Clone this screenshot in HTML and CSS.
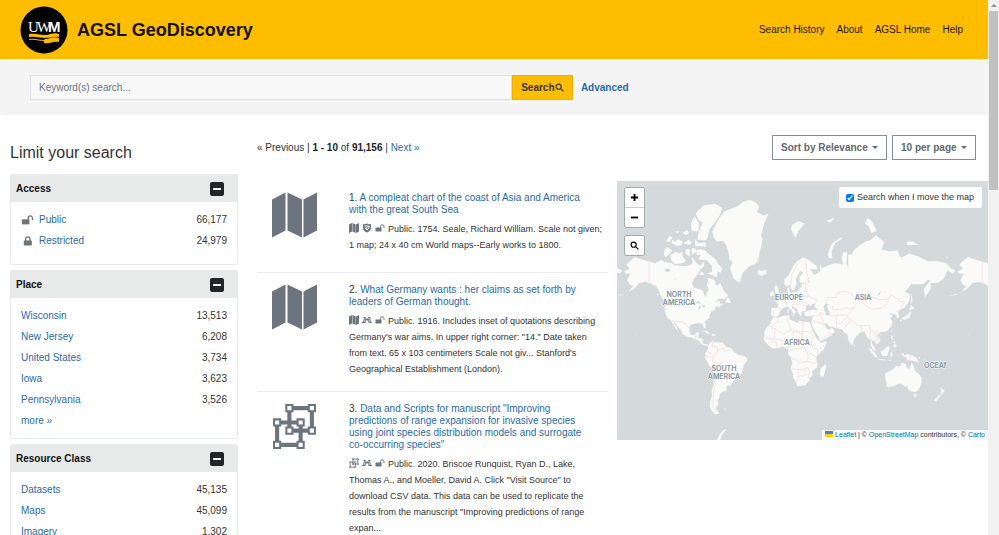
FILE: index.html
```html
<!DOCTYPE html>
<html lang="en">
<head>
<meta charset="utf-8">
<title>AGSL GeoDiscovery</title>
<meta name="viewport" content="width=device-width, initial-scale=1">
<link rel="stylesheet" href="styles.css">
</head>
<body>
<svg class="defs" width="0" height="0" aria-hidden="true">
  <symbol id="i-map" viewBox="0 0 45 45">
    <path d="M0 7 13.500 0v38L0 45zM15.500 0 30 7v38l-14.500-7zM31.500 7 45 0v38l-13.500 7z"/>
  </symbol>
  <symbol id="i-polygon" viewBox="0 0 42 45">
    <path fill="none" stroke="currentColor" stroke-width="4" d="M16 5h22v22H16zM4 19h23v22H4z"/>
    <path d="M12 1h8v8h-8zM34 1h8v8h-8zM34 23h8v8h-8zM12 23h8v8h-8zM0 15h8v8H0zM23 15h8v8h-8zM0 37h8v8H0zM23 37h8v8h-8z"/>
    <path fill="#fff" d="M14 3h4v4h-4zM36 3h4v4h-4zM36 25h4v4h-4zM14 25h4v4h-4zM2 17h4v4H2zM25 17h4v4h-4zM2 39h4v4H2zM25 39h4v4h-4z"/>
  </symbol>
  <symbol id="i-unlock" viewBox="0 0 20 16">
    <path d="M1 7h12v8H1z"/><path fill="none" stroke="currentColor" stroke-width="2" d="M11 8V5a3.500 3.500 0 0 1 7 0v3"/>
  </symbol>
  <symbol id="i-lock" viewBox="0 0 20 16">
    <rect x="4" y="7" width="13" height="8" rx="1"/><path fill="none" stroke="currentColor" stroke-width="2" d="M7 8V5a3.500 3.500 0 0 1 7 0v3"/>
  </symbol>
  <symbol id="i-shield" viewBox="0 0 18 20">
    <path d="M1 2q4 1 8-1 4 2 8 1v8c0 5-5 8-8 9-3-1-8-4-8-9z"/><path fill="none" stroke="#fff" stroke-width="2" d="M4 6h9v4l-4 4-3-4h4"/>
  </symbol>
  <symbol id="i-minn" viewBox="0 0 20 14">
    <path fill="none" stroke="currentColor" stroke-width="2" d="M3 2h4l3 6 3-6h4M5 2 3 12M15 2l2 10M7 5l-1 7M13 5l1 7M0 12h7M13 12h7"/>
  </symbol>
  <symbol id="i-search" viewBox="0 0 16 16">
    <circle cx="6.500" cy="6.500" r="4.500" fill="none" stroke="currentColor"/><path stroke="currentColor" d="m10 10 5 5"/>
  </symbol>
</svg>
<div class="window">
  <div class="page">
    <header class="masthead">
      <a class="brand" href="#">
        <svg class="brand-logo" viewBox="0 0 48 48" role="img" aria-label="UWM">
          <circle cx="24" cy="24" r="23.500" fill="#000"/>
          <text class="logo-text" x="8" y="26">U<tspan dx="-2">W</tspan><tspan class="logo-bold" dx="-3">M</tspan></text>
          <path fill="#ffbd00" d="M9 28c7-1 11 1 16 1s9-3 14-1v3c-5-1-9 1-14 1s-9-2-16-1zM9 33c6-1 10 1 15 1l1-1c5 0 9-3 14-1v4c-6-1-9 2-15 1v-2c-5 0-9-2-15-1z"/>
        </svg>
        <span class="brand-name">AGSL GeoDiscovery</span>
      </a>
      <nav class="topnav" aria-label="Main">
        <a href="#">Search History</a><a href="#">About</a><a href="#">AGSL Home</a><a href="#">Help</a>
      </nav>
    </header>

    <section class="searchbar">
      <form class="search-form" role="search">
        <input class="search-input" type="text" placeholder="Keyword(s) search..." aria-label="Keyword search">
        <button class="search-button" type="button">Search<svg class="search-icon"><use href="#i-search"/></svg></button>
      </form>
      <a class="advanced" href="#">Advanced</a>
    </section>

    <main class="layout">
      <aside class="sidebar">
        <h2 class="sidebar-title">Limit your search</h2>
        <section class="facet facet-access">
          <h3 class="facet-head">Access <button class="toggle" type="button" aria-label="Collapse Access"></button></h3>
          <ul class="facet-list">
            <li><svg class="facet-icon"><use href="#i-unlock"/></svg><a href="#">Public</a><span class="count">66,177</span></li>
            <li><svg class="facet-icon"><use href="#i-lock"/></svg><a href="#">Restricted</a><span class="count">24,979</span></li>
          </ul>
        </section>
        <section class="facet">
          <h3 class="facet-head">Place <button class="toggle" type="button" aria-label="Collapse Place"></button></h3>
          <ul class="facet-list">
            <li><a href="#">Wisconsin</a><span class="count">13,513</span></li>
            <li><a href="#">New Jersey</a><span class="count">6,208</span></li>
            <li><a href="#">United States</a><span class="count">3,734</span></li>
            <li><a href="#">Iowa</a><span class="count">3,623</span></li>
            <li><a href="#">Pennsylvania</a><span class="count">3,526</span></li>
            <li><a href="#">more »</a></li>
          </ul>
        </section>
        <section class="facet">
          <h3 class="facet-head">Resource Class <button class="toggle" type="button" aria-label="Collapse Resource Class"></button></h3>
          <ul class="facet-list">
            <li><a href="#">Datasets</a><span class="count">45,135</span></li>
            <li><a href="#">Maps</a><span class="count">45,099</span></li>
            <li><a href="#">Imagery</a><span class="count">1,302</span></li>
          </ul>
        </section>
      </aside>

      <div class="content">
        <div class="toolbar">
          <div class="pager">« Previous | <strong>1 - 10</strong> of <strong>91,156</strong> | <a href="#">Next »</a></div>
          <div class="dropdown"><select aria-label="Sort results"><option>Sort by Relevance</option></select></div>
          <div class="dropdown"><select aria-label="Results per page"><option>10 per page</option></select></div>
        </div>
        <div class="columns">
          <div class="results">
            <article class="result">
              <svg class="thumb"><use href="#i-map"/></svg>
              <div class="result-body">
                <h3 class="result-title">1. <a href="#">A compleat chart of the coast of Asia and America with the great South Sea</a></h3>
                <p class="result-text"><svg class="mini"><use href="#i-map"/></svg><svg class="mini"><use href="#i-shield"/></svg><svg class="mini"><use href="#i-unlock"/></svg>Public. 1754. Seale, Richard William. Scale not given; 1 map; 24 x 40 cm World maps--Early works to 1800.</p>
              </div>
            </article>
            <article class="result">
              <svg class="thumb"><use href="#i-map"/></svg>
              <div class="result-body">
                <h3 class="result-title">2. <a href="#">What Germany wants : her claims as set forth by leaders of German thought.</a></h3>
                <p class="result-text"><svg class="mini"><use href="#i-map"/></svg><svg class="mini"><use href="#i-minn"/></svg><svg class="mini"><use href="#i-unlock"/></svg>Public. 1916. Includes inset of quotations describing Germany's war aims. In upper right corner: "14." Date taken from text. 65 x 103 centimeters Scale not giv... Stanford's Geographical Establishment (London).</p>
              </div>
            </article>
            <article class="result">
              <svg class="thumb"><use href="#i-polygon"/></svg>
              <div class="result-body">
                <h3 class="result-title">3. <a href="#">Data and Scripts for manuscript "Improving predictions of range expansion for invasive species using joint species distribution models and surrogate co-occurring species"</a></h3>
                <p class="result-text"><svg class="mini"><use href="#i-polygon"/></svg><svg class="mini"><use href="#i-minn"/></svg><svg class="mini"><use href="#i-unlock"/></svg>Public. 2020. Briscoe Runquist, Ryan D., Lake, Thomas A., and Moeller, David A. Click "Visit Source" to download CSV data. This data can be used to replicate the results from the manuscript "Improving predictions of range expan...</p>
              </div>
            </article>
          </div>

          <div class="map">
            <svg class="map-canvas" viewBox="0 0 371 259" preserveAspectRatio="xMidYMid slice" role="img" aria-label="World map">
              <defs><clipPath id="tile-edge"><path d="M0 0h329v259H0z"/></clipPath></defs>
              <path fill="#d9dadb" d="M0 0h371v6H0z"/>
              <g id="world"></g>
              <g class="map-label" text-anchor="middle">
                <text x="62" y="116">NORTH</text><text x="62" y="124">AMERICA</text>
                <text x="107" y="190">SOUTH</text><text x="107" y="198">AMERICA</text>
                <text x="172" y="119">EUROPE</text><text x="246" y="119">ASIA</text><text x="180" y="164">AFRICA</text>
              </g>
              <g class="map-label" clip-path="url(#tile-edge)"><text x="307" y="187">OCEANIA</text></g>
            </svg>
            <div class="map-controls">
              <div class="control-group">
                <button type="button" aria-label="Zoom in"><svg viewBox="0 0 10 10"><path d="M5 1v8M1 5h8"/></svg></button>
                <button type="button" aria-label="Zoom out"><svg viewBox="0 0 10 10"><path d="M1 5h8"/></svg></button>
              </div>
              <div class="control-group"><button type="button" aria-label="Search here"><svg><use href="#i-search"/></svg></button></div>
            </div>
            <label class="map-toggle"><input type="checkbox" checked>Search when I move the map</label>
            <div class="attribution"><svg class="flag" viewBox="0 0 8 6"><path fill="#4c7be1" d="M0 0h8v3H0z"/><path fill="#ffd500" d="M0 3h8v3H0z"/></svg><a href="#">Leaflet</a> | © <a href="#">OpenStreetMap</a> contributors, © <a href="#">Carto</a></div>
          </div>
        </div>
      </div>
    </main>
  </div>
  <div class="scroll-rail" aria-hidden="true"><div class="scroll-arrow"></div><div class="scroll-thumb"></div></div>
</div>
<script src="map.js"></script>
</body>
</html>
```
FILE: styles.css
```css
* { box-sizing: border-box; }
body {
  margin: 0;
  font: 10px/15px "Liberation Sans", Arial, sans-serif;
  color: #333;
  background: #fff;
}
a { color: #2a6aa9; text-decoration: none; }
button, input, select { font: inherit; color: inherit; margin: 0; }
h2, h3, p, ul { margin: 0; padding: 0; }
svg { fill: currentColor; }
.defs { position: absolute; }

.window { display: flex; height: 100vh; overflow: hidden; }
.page { flex: 1; min-width: 0; }

.masthead {
  display: flex;
  align-items: center;
  justify-content: space-between;
  height: 59px;
  padding: 0 25px 0 20px;
  background: #ffbd00;
}
.brand { display: flex; align-items: center; gap: 9px; color: #111; }
.brand-logo { width: 48px; height: 48px; }
.logo-text { font: 15px "Liberation Serif", serif; fill: #fff; }
.logo-bold { font: 700 15px "Liberation Sans", sans-serif; }
.brand-name { font-size: 18px; line-height: 24px; font-weight: 700; }
.topnav { display: flex; gap: 12px; }
.topnav a { color: #1b1500; }

.searchbar {
  display: flex;
  align-items: center;
  gap: 8px;
  height: 56px;
  padding: 0 30px;
  background: #f4f4f4;
  border-radius: 0 0 3px 3px;
}
.search-form { display: flex; width: 58.5%; height: 25px; }
.search-input {
  flex: 1;
  min-width: 0;
  padding: 0 8px;
  border: 1px solid #dce0e4;
  background: #f8f8f8;
}
.search-input::placeholder { color: #6c757d; opacity: 1; }
.search-button {
  display: flex;
  align-items: center;
  justify-content: center;
  width: 61px;
  padding: 0;
  border: 1px solid #efb000;
  background: #ffbd00;
  color: #333;
  font-weight: 700;
}
.search-icon { width: 9px; height: 9px; stroke-width: 2; }
.advanced { font-weight: 700; }

.layout { display: grid; grid-template-columns: minmax(0, 1fr) minmax(0, 3fr); }
.sidebar { padding: 28px 9px 0 10px; }
.sidebar-title { margin-bottom: 11px; font-size: 16px; line-height: 20px; font-weight: 400; }
.facet {
  margin-bottom: 5px;
  padding-bottom: 7px;
  border: 1px solid #e9eaea;
  border-radius: 2px;
}
.facet-access { padding-bottom: 13px; }
.facet-head {
  display: flex;
  align-items: center;
  justify-content: space-between;
  height: 27px;
  padding: 0 13px 0 5px;
  background: #e8eaea;
  color: #111;
  font-size: 10px;
}
.toggle {
  display: grid;
  place-items: center;
  width: 14px;
  height: 14px;
  padding: 0;
  border: 0;
  border-radius: 2px;
  background: #212529;
}
.toggle::before { content: ""; width: 8px; height: 2px; background: #fff; }
.facet-list { padding: 7px 10px 0; list-style: none; }
.facet-list li { display: flex; align-items: center; height: 21px; }
.facet-icon { width: 13px; height: 10px; margin-right: 5px; color: #6c757d; }
.count { margin-left: auto; }

.content { padding: 20px 0 0 10px; }
.toolbar { display: flex; align-items: center; gap: 5px; height: 25px; margin-right: 12px; }
.pager { flex: 1; }
.pager strong { color: #212529; }
.dropdown { position: relative; color: #5f6870; }
.dropdown select {
  height: 25px;
  padding: 0 18px 0 8px;
  appearance: none;
  border: 1px solid #868e95;
  border-radius: 0;
  background: #fff;
  font-weight: 700;
}
.dropdown::after {
  content: "";
  position: absolute;
  right: 9px;
  top: 11px;
  border: 3px solid transparent;
  border-top-color: currentColor;
  border-bottom: 0;
  pointer-events: none;
}
.columns {
  display: grid;
  grid-template-columns: minmax(0, 351fr) minmax(0, 371fr);
  align-items: start;
  gap: 9px;
  margin-top: 21px;
}
.results { padding-top: 11px; }
.result { display: flex; gap: 32px; padding: 0 0 14px 15px; }
.result + .result { padding-top: 11px; border-top: 1px solid #ebebeb; }
.thumb { flex: none; width: 45px; height: 46px; color: #6c757d; }
.result-body { flex: 1; min-width: 0; min-height: 66px; }
.result-title { padding-right: 10px; margin-bottom: 5px; font-size: 10px; line-height: 12px; font-weight: 400; }
.result-text { padding-right: 4px; font-size: 9px; line-height: 16px; }
.mini { width: 10px; height: 10px; margin-right: 3px; vertical-align: -1px; color: #6c757d; }

.map { position: relative; background: #d4dadc; }
.map-canvas { display: block; width: 100%; }
.land { fill: #fafaf8; }
.lake { fill: #d4dadc; }
.border { fill: none; stroke: #f4e4e5; stroke-width: 1; }
.map-label {
  font: 600 7px Inter, sans-serif;
  fill: #8191a0;
  stroke: #fafaf8;
  stroke-width: 1px;
  paint-order: stroke;
}
.map-controls { position: absolute; left: 7px; top: 6px; display: grid; gap: 7px; }
.control-group { border: 1px solid #a5aaac; border-radius: 2px; background: #fff; }
.control-group button {
  display: grid;
  place-items: center;
  width: 19px;
  height: 19px;
  padding: 0;
  border: 0;
  background: none;
  color: #000;
}
.control-group button + button { height: 20px; border-top: 1px solid #ccc; }
.control-group svg { width: 9px; height: 9px; stroke: #000; stroke-width: 2; }
.map-toggle {
  position: absolute;
  right: 6px;
  top: 6px;
  display: flex;
  align-items: center;
  gap: 3px;
  height: 21px;
  padding: 0 8px 0 7px;
  border-radius: 2px;
  background: #fff;
  font-size: 9px;
}
.map-toggle input { width: 8px; height: 8px; }
.attribution {
  position: absolute;
  right: 0;
  bottom: 0;
  padding: 0 3px;
  background: rgba(255, 255, 255, .8);
  font-size: 7px;
  line-height: 10px;
  white-space: nowrap;
}
.attribution a { color: #0078a8; }
.flag { width: 8px; height: 6px; margin-right: 2px; }

.scroll-rail { width: 11px; background: #f1f1f1; }
.scroll-arrow { display: grid; place-items: center; height: 11px; }
.scroll-arrow::before {
  content: "";
  border: 3px solid transparent;
  border-top: 0;
  border-bottom-color: #8f8f8f;
}
.scroll-thumb { height: 179px; margin: 0 1px; background: #c1c1c1; }
```
FILE: map.js
```javascript
// Outlines are "lon,lat" pairs, drawn in Web Mercator.
const land = [
  // North America
  "-168,65.7 -163,66.5 -162,67 -166,68.4 -163,69.5 -156.5,71.3 -150,70.5 -141,69.6 -135,69 -128,70.2 -124,69.5 -116,69 -114,68.2 -108,68 -102,67.8 -97,68.2 -94,69 -95,71.5 -92,70 -90,69 -86,68 -82,69.5 -81.5,68 -86,66.3 -88,64.5 -93,62 -94.5,60 -94,58.7 -92.5,57 -88,56.6 -82.5,55.2 -82,53 -79.5,51.3 -79,54 -76.6,56 -78.5,58.8 -77.5,61 -78,62.4 -73.5,62.2 -69.5,61 -69.5,58.9 -67,58.4 -64.5,60.2 -62,57.5 -60,55 -56,52.5 -59,50.2 -66,50.2 -70,47.5 -65,49 -64.5,46.5 -60.5,46.8 -66,43.6 -67,44.8 -70.5,43 -70,41.7 -74,40.6 -76,37 -75.7,35.3 -81,31.7 -80,26.8 -80.4,25.2 -81.8,26 -82.8,28 -84,30 -89.5,30.2 -94,29.6 -97.3,27.8 -97.8,22.3 -95.8,18.8 -91.5,18.5 -90.4,21 -87,21.5 -88,17 -88.3,15.7 -83.3,15 -83.8,11 -81.5,8.9 -79.5,9.5 -77,8 -80,7.4 -82.8,8.2 -85.8,10.5 -87.6,13 -92,14.5 -95,16 -99.5,16.6 -105.5,20 -106,23 -109.4,26 -112.5,30 -114.7,31.7 -112.5,28 -110,24 -109.5,23 -112,25 -114,27.5 -115.5,29.8 -117.2,32.6 -120.6,34.5 -124.2,40 -124,44 -124.6,48.3 -122.5,48.5 -127.5,51 -130.5,55 -134,58.5 -138,59.2 -145,60.5 -149,60 -151.5,60 -154,58.5 -158,56.5 -164,54.6 -158.5,58 -162,59 -165,61.5 -161,64.5 -166,64.5",
  // Greenland and the Arctic archipelago
  "-73,78.3 -66,80.8 -60,82 -50,82.5 -45,82.8 -40,83.3 -32,83.6 -25,83.2 -22,82.6 -25,82 -18,81.4 -12,81.6 -17,80 -20,77.5 -18.5,76.5 -20,74.5 -22,72.5 -22.5,70.8 -26,70.5 -22.5,70 -27,68.6 -32,68 -38,65.8 -40.5,64.5 -43,60.2 -46,60.8 -50,62.5 -52,65 -53.7,67 -51,69.5 -54.5,70.5 -55,72.5 -58,75 -61,76.1 -68,76 -71,77",
  "-62,82.5 -70,83.1 -82,82.9 -91,81.7 -87,80.5 -83,80.2 -86,79 -88,77.8 -89,76.4 -80,76.2 -78,77 -76,78.8 -72,79.8 -65,81.3",
  "-90,73.6 -85,73.8 -81,73.6 -78,72.6 -73,71.4 -68,70 -67,69 -62,66.8 -64,65 -67,65.7 -68,63 -65,62 -72,63.8 -78,64.5 -73,65.5 -73,68 -79,70 -88,70.5 -85,72 -89.5,72",
  "-117,70 -113,68.6 -105,69 -101,69.8 -105,71.5 -105,73 -109,72.5 -112,73 -118,72",
  "-125,72 -123,71.2 -119,72.5 -116,73.3 -121,74.4 -124.5,73.8",
  "-102,72.5 -97,71.5 -97,73.8 -101,73.8", "-95,72 -90,73 -91,74 -95,74",
  "-92,76.7 -88,75.6 -80,75.7 -80,74.6 -91,74.7", "-117,75.5 -111,74.7 -106,75 -105,76 -110,76.6 -112,75.8 -116,76.4",
  "-104,75.5 -98,75 -95,75.6 -98,76.5", "-123,76 -119,75.8 -116,77 -119,77.4",
  "-96,80 -92,81.3 -87,80 -88,78.3 -95,78.6", "-105,78 -100,78.7 -98,78 -101,77.6", "-113,78.3 -109,78.6 -110,77.9",
  "-87,64 -81,64 -84,65.8", "-59,47.8 -53,47 -53.5,49 -56,51.5", "-85,22 -80,23.2 -74.3,20.2 -77.5,20 -81,22.2",
  "-74.3,18.5 -72.5,20 -68.5,18.5 -71.5,17.8", "-24,65.5 -22,66.4 -20,65.8 -14.5,66.3 -14,64.8 -19,63.5 -22.5,64",
  "-128,51 -123.5,48.4 -126,49.2", "-133,54 -131,53 -132,52.3", "-156,20 -155,19.3 -156,19", "-178,52 -170,53.2 -164,54.6 -166,54.3 -170,52.7",
  // South America
  "-77,8 -75.5,10.7 -71.7,12.3 -71,11.2 -68,11.2 -62,10.7 -57,6 -51.5,4.3 -50,0.5 -44,-2.5 -38.5,-3.8 -35,-6 -35.2,-9 -39,-13 -39.5,-18 -41.5,-22.5 -46.5,-24.2 -48.7,-28 -53,-33.5 -58,-34 -56.8,-36.6 -58,-38.3 -62,-39 -65,-41 -65,-43.5 -67.5,-46 -65.8,-48 -69,-51 -68.3,-52.5 -65.3,-54.8 -69,-55.4 -73.5,-53 -75.5,-50 -75,-46.5 -73,-42 -73.5,-38 -71.5,-33 -70.3,-27 -70.2,-18.5 -75.5,-15 -79,-8.2 -81.2,-5.5 -80,-3 -80.8,-1 -79,1.5 -77.3,4 -77.7,7",
  "-61,-52 -58,-51.5 -59,-52.3", "-57,-63.3 -61,-64 -65,-66 -68,-68.5 -65,-69 -63,-66.5 -60,-64.8",
  // Africa
  "-6,35.8 -2,35.2 3,36.8 10,37.3 11,35 10.3,34 15,32.3 19.5,30.4 20.5,32.7 25,31.6 32,31.3 32.5,30 35.5,24 37.3,20 39.5,15.5 43,12 44,10.5 51.2,11.8 48,4.5 43,-1 39.5,-4.5 39.5,-8 40.7,-12 40.5,-15.5 35,-20 35.5,-24 32.8,-26 32,-29 28,-33 22,-34 18.5,-34.2 18,-31 15,-27 14.5,-22.5 11.8,-17 13.7,-12 13,-8.5 12,-5 9,-1 9.5,3.5 7,4.4 4,6.4 -2,4.8 -7.5,4.4 -12,7.5 -15,11 -17.3,14.7 -16.3,19 -17,21.5 -14.5,26 -10,29.5 -9.5,32.3",
  "49.3,-12 50.4,-15.5 47.2,-25 44.2,-25 43.5,-22 44.3,-17 47,-15",
  // Europe and Asia
  "-9,37 -9.3,39 -8.8,43.3 -2,43.5 -1.3,46 -4.5,48.2 -1.5,48.7 1.5,50.2 4.5,52.5 8.5,53.8 8.2,57 10.6,57.6 10,55 12,54.2 18.5,54.7 21,55.5 21.5,57.5 24,57.3 23.5,59.3 30,59.9 23,60 21.3,61 21.5,63 25.3,65 22,65.7 17.5,62 18.5,60 16.5,57 14.3,55.4 12.7,56 11,59.2 8,58 5.2,59 5,62 10,64 14,67.5 19,69.8 25.5,71 31,70.3 41,67.5 40,66.3 33,66.7 37,64 41,64.7 44,66 43.5,68.5 46,67 53,68.3 60,69 65,68.8 68.5,68.3 67,71 69,73 73,72.8 72,69 74,67 74,72 78,72.3 80,73.5 87,75 93,76 98,76.3 104,77.6 108,76.7 113,75.8 110,73.8 118,73.1 127,73.5 131,71 135,71.6 140,72.5 150,71.5 160,69.7 170,69.8 180,69 185,67 190,66 187,64.5 182,66 180,65 178,62.6 171,60 163,59.8 163,56.5 157,51.2 155.8,56.5 163,61.5 160,61.5 155,59.3 142,59.2 135.5,54.8 141,53 140,48.5 135,43.5 130.8,42.3 127.5,39.8 129.3,36 126.5,34.5 126,37.6 121.5,39 118,39 122.3,37 119.3,35 121.8,31.5 120,26.5 116,22.8 108.5,21.5 106,19 109,13 107,10.5 105,9 102.5,12 100.5,13.4 99.3,10 103.3,4 104,1.4 101,3 98.3,8 98.5,14 94.5,16 91.5,22.5 87,21.3 82,16.5 80,13 79.5,10 77.5,8 74.5,13 72.8,20 70,21 67,24.8 61.5,25.2 57,26.8 54,26.6 50.5,30 48,30 50,26.5 51.5,24.5 54.5,24.2 56.3,26 59.8,22.4 55,17.5 45,12.8 43,13 42.5,16.5 39,21 35,28 34.3,31.3 36,36.7 30.5,36.5 27.3,37 26.5,39.7 29.5,41 35,42 41.5,41.5 37.5,44.8 39,47 35,46.2 33.5,44.5 31,46.6 28,43.7 28.5,41.2 23.5,40.5 24,38 22.5,36.6 19.5,40 19.5,42 14,45 12.4,44.5 18.4,40 16.5,39.5 15.8,38 12.5,41.7 8.5,44.3 4,43.4 0,40 -.5,38 -2,36.8 -5.5,36",
  "-5.5,50 1,51 1.5,52.8 -1.5,55 -2,57.5 -4,58.6 -6,57.5 -4.5,54.5 -3,53.8 -4.8,53 -4.8,51.8 -3,51.4", "-10,52 -6.5,52.2 -6,54.5 -8,55.2 -10,54",
  "12.5,38 15.5,38.2 15,36.7", "8.3,39 9.7,39.2 9.5,43 8.6,42", "32.5,35 34.5,35.6 33,34.6", "23.5,35.5 26.3,35.2 24,34.9",
  "53,71 57,70.7 56,73 60,75.5 68,76.8 66,77 56,75.3 52,72.3", "12,79 17,76.8 20,78.5 27,80 20,80.4 14,79.8",
  "95,81 99,80.5 102,79.5 105,78.5 99,78 96,79.5 92,80", "50,80.5 60,81 55,80.2", "138,75 150,75 143,76 137,75.8", "179,71 182,71.4 181,70.9",
  "142,54.3 143.5,50 142.7,46 142,48", "140,42 143,42.2 145.5,43.5 141.8,45.4", "131,34 135.5,33.6 140.5,35.5 142,39.5 141,41.3 139.8,39 136.5,37 133,35.5",
  "130,33.5 131.8,33 130.6,31.2", "120.2,23 121.8,25.2 121,22", "109,19 111,20 109.5,18.2", "80,9.5 81.7,7 80.3,6",
  "120.3,16 120.8,18.5 122.2,18.3 121.5,15 124,13 120.8,13.9", "122,7 125.3,9.7 126.4,7 125.5,5.7", "122,11 125,12.3 124,9.8",
  "109,1.5 113,3 117,7 119,5 117.5,1 116,-4 110.5,-3", "95.3,5.6 98,4.3 104,-1.5 106,-5.8 102,-4", "105.5,-6.5 114.5,-7.8 114,-8.6 106.5,-7.4",
  "119.5,-3 120,.8 125,1.3 121,.3 121,-1 123,-1 121.5,-2 123,-4.5 121,-3 120.5,-5.5", "116,-8.5 123,-8.3 119,-9", "124,-10 127,-8.5 125,-9",
  "131,-.8 134.5,-1 135,-3.3 138,-1.6 144.5,-3.8 147.8,-6 150.5,-10.5 147,-9.5 143.5,-8.8 138,-8.3 137,-5 133,-4",
  "148.5,-5.7 152,-4.3 151,-6", "155,-6 160,-9.5 156,-7.5", "164,-20 167,-22.4 165,-21.5",
  // Australia and New Zealand
  "114,-22 114,-26.5 115.7,-32 115.3,-34.3 118,-35 123.8,-33.9 129,-31.6 132,-32 135.8,-34.8 137.8,-33 138.3,-35.6 140.5,-38 143.5,-38.7 146.4,-39 150,-37.3 153,-32 153.3,-26 149.5,-22 146,-19 145,-15 142.5,-10.8 141.5,-14 140.5,-17.5 136,-15.5 136.8,-12.2 132,-11.3 129.5,-15 126,-14 122.2,-18",
  "144.7,-40.8 148.3,-41 147,-43.5 145.5,-42.8", "173,-34.5 175.5,-36.5 178.3,-37.8 175.3,-41.5 173.8,-39.3 175,-38", "172.7,-40.6 174,-41.7 171,-44.5 169,-46.6 166.5,-46 170.5,-43"
];
const lakes = [
  "47,44.5 50,46.8 53,46.5 51,44.5 53.5,41 53.8,37 50,37.4 49,40.5", "-92,46.8 -88,48.7 -84.5,46.6 -88,46.9", "-87.8,42 -86.3,42 -85,45.7 -87.5,44.5",
  "-84,46 -80,45 -82,43.2 -83.5,44.5", "-83,41.7 -79,42.8 -81,42.6", "-79.5,43.3 -76.5,43.8 -77,44", "-99,53.8 -97,50.5 -96.6,52", "-125,66 -120,65.2 -118,66.5 -122,66.8",
  "-117,61 -110,62.6 -113,62.2", "32,-.5 34,0 33,-2.5", "104,51.7 110,55.5 108,53", "30,60 33,60.5 31,61.5"
];
const borders = [
  "-141,69.6 -141,60.3 -137,59 -130,55.5", "-117,32.6 -111,31.4 -106.5,31.8 -102,29.6 -99,26.5 -97.3,26",
  "-92,14.6 -90.5,17.5 -89,17.8", "-72,12 -73,7 -67.5,6 -67,1.5 -70,-4 -73,-7 -70.5,-11 -65,-11 -60,-16 -58,-20 -54.5,-25 -57.5,-30 -53.5,-33.5",
  "-67,1.5 -64,4 -60,5 -60,1.5 -52,3", "-79,1 -75,-.2 -70,-4 -75,-5 -80,-4", "-69.5,-18 -67,-22.5 -69,-27 -70,-33 -71.5,-40 -72,-47 -72,-51 -68.5,-52.5", "-67,-22.5 -62.5,-22 -58,-27 -54.5,-25",
  "-13,27.7 -8.7,27.5 -8.7,26 -5,25 3,19.5 12,23.5 10,30 8,34", "-2,35 -1,32 -8.7,28.5", "25,31.5 25,22 37,22", "12,23.5 16,23 24,19.5 24,15.5 22,12 14,13 4,13.5 -4,14 -12,15",
  "-5,25 -6,15.5 -12,15 -16.5,16.5", "24,15.5 25,22 15,23 14,13 9,4.5", "33,22 36,17 34,10 36,4.5 42,4 48,8", "24,10 27,5 18,4 12,2", "27,5 31,-3 30,-9 22,-11 16,-7 12,-6", "41,4 41,-2", "34,-1 39,-4.7", "30,-9 34,-11 40,-11", "12,-17 21,-18 25,-18 30,-16 33,-20 31,-24 32,-27", "20,-18 20,-28 17,-29", "20,-25 27,-24 29,-22 25,-18", "2.5,6.5 3,12", "-3,5 -3,11 -11,12",
  "-7,42 -7,37", "-2,43 3,42.5", "7,44 7,47.5 3,51", "6,51 8,54", "14,54 15,51 12,49 17,48 24,49 24,54 20,55", "24,52 31,52 28,56 28,60", "24,50 32,52 40,49 38,47", "13,46 19,46 28,45", "22,48 28,48 29,45", "28,70 29,66 31,62 28,60.5", "12,59 13,64 20,69",
  "50,47 52,51 61,51 62,54 70,55 77,54 80,51 87,49 98,52 108,49.5 117,50 120,53 127,50 131,48 135,48.5 131,43", "87,49 93,45 100,42.5 110,43 117,47 117,50", "56,45 58,42 66,42 70,43 80,43 82,46 87,49", "54,37.5 60,37 66,38 73,37 80,43", "44,40 44,37 48,30", "36,37 42,37 44,40 48,38", "61,37 61,30 62,25", "61,30 66,30 70,34 74,36 78,33 73,30 70,25", "74,36 79,32 85,28 92,28 97,28 98,24 102,22 106,23", "35,29 39,32 48,29", "45,13 50,18 56,20 52,23", "88,27 89,22", "98,24 98,18 99,12", "101,22 104,18 105,13 103,11", "104,22 106,17 107,11", "125,40 130,42", "141,-2.6 141,-9"
];

const project = ([lon, lat], shift) => {
  const x = 162.7 + lon * 0.9255 + shift;
  const y = 171.6 - 53.03 * Math.log(Math.tan(Math.PI / 4 + lat * Math.PI / 360));
  return x.toFixed(1) + " " + y.toFixed(1);
};
const pathOf = (lines, close, shift) => lines.map(line =>
  "M" + line.split(" ").map(p => project(p.split(",").map(Number), shift)).join("L") + close).join("");

const world = document.getElementById("world");
for (const [className, lines, close] of [["land", land, "Z"], ["lake", lakes, "Z"], ["border", borders, ""]]) {
  for (const shift of [-333.2, 0, 333.2]) {
    const path = document.createElementNS("http://www.w3.org/2000/svg", "path");
    path.setAttribute("class", className);
    path.setAttribute("d", pathOf(lines, close, shift));
    world.append(path);
  }
}
```
